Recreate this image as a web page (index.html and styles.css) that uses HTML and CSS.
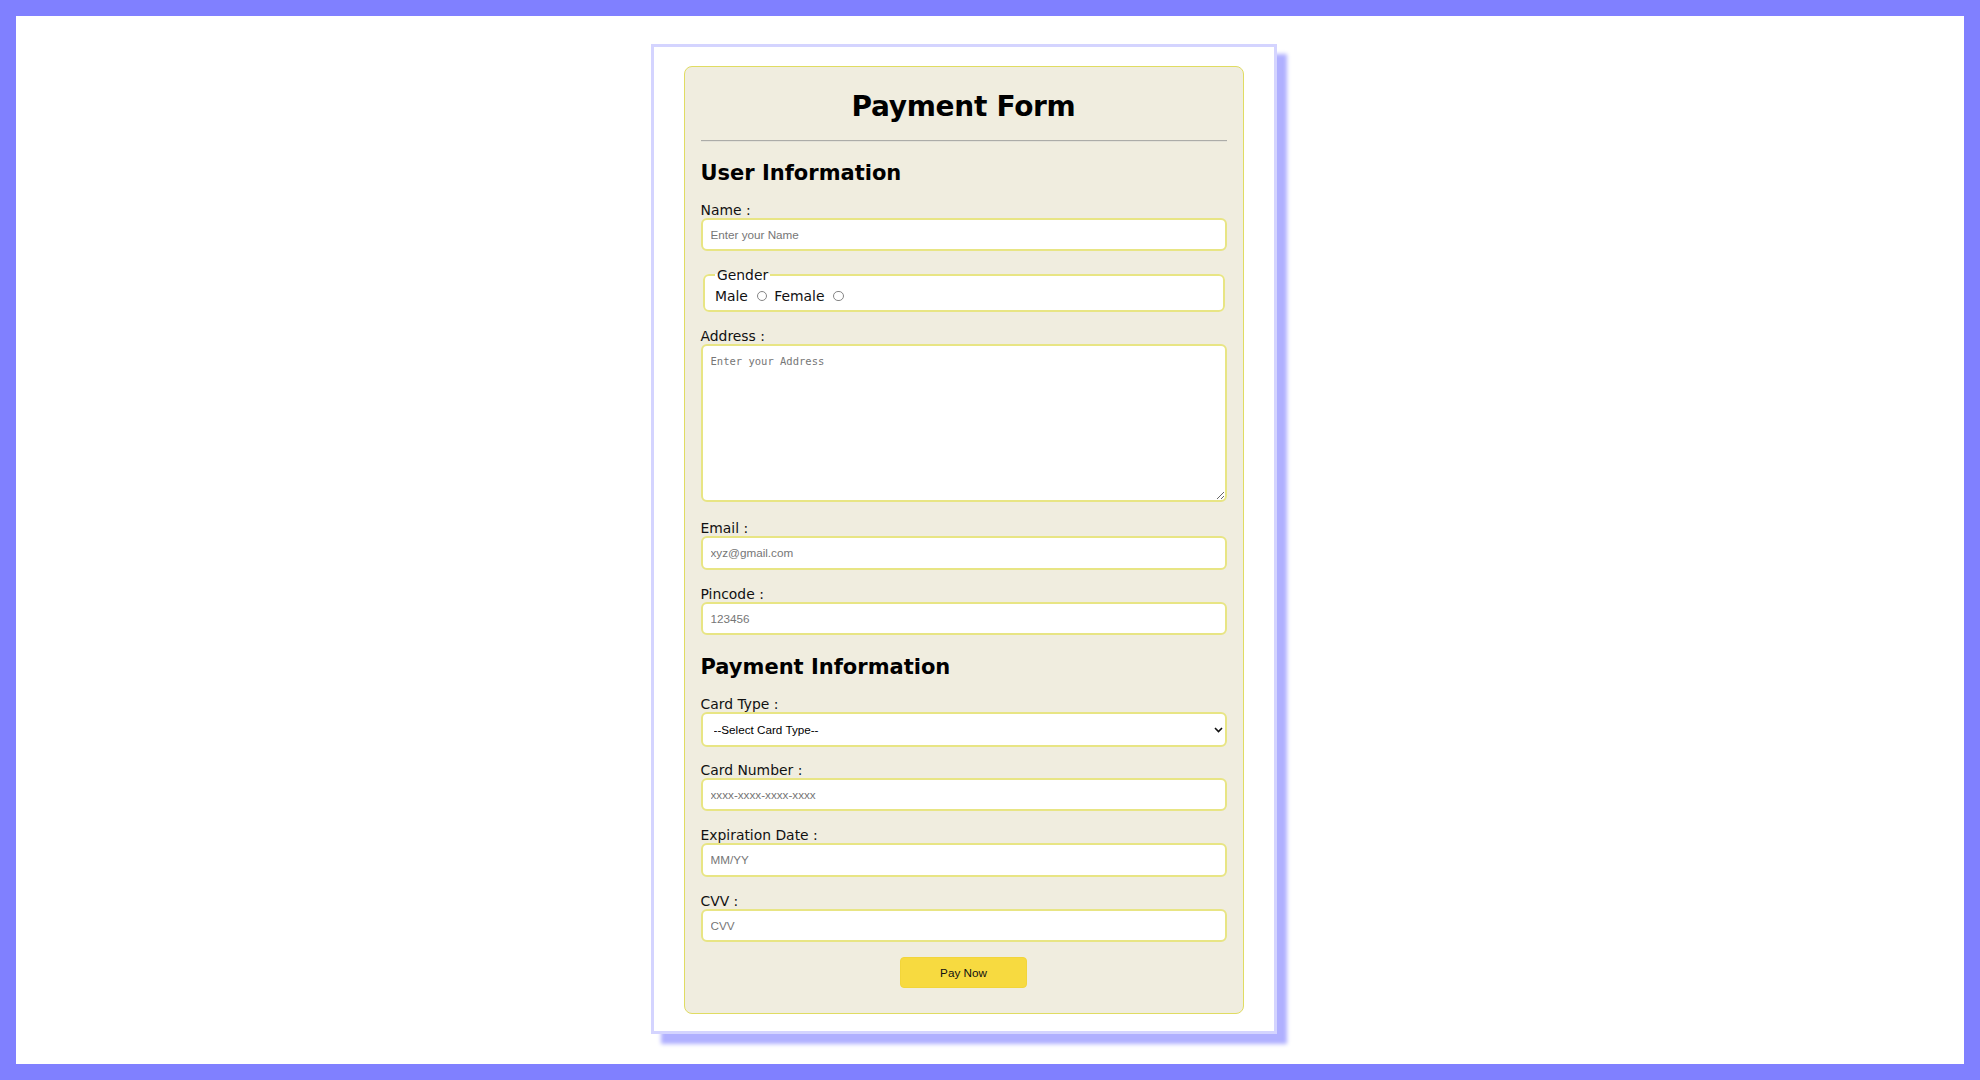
FILE: index.html
```html
<!DOCTYPE html>
<html lang="en">
<head>
<meta charset="utf-8">
<title>Payment Form</title>
<link rel="stylesheet" href="styles.css">
</head>
<body>
<div class="page">
  <div class="sheet">
    <form class="card">
      <h1 class="title">Payment Form</h1>
      <hr class="divider">
      <h2 class="section">User Information</h2>

      <label class="label" for="name">Name :</label>
      <input class="field" id="name" type="text" placeholder="Enter your Name">

      <fieldset class="gender">
        <legend class="legend">Gender</legend>
        <span>Male</span> <input class="radio" type="radio" name="gender"> <span>Female</span> <input class="radio" type="radio" name="gender">
      </fieldset>

      <label class="label" for="address">Address :</label>
      <textarea class="area" id="address" placeholder="Enter your Address"></textarea>

      <label class="label" for="email">Email :</label>
      <input class="field" id="email" type="email" placeholder="xyz@gmail.com">

      <label class="label" for="pincode">Pincode :</label>
      <input class="field" id="pincode" type="text" placeholder="123456">

      <h2 class="section section-pay">Payment Information</h2>

      <label class="label" for="cardtype">Card Type :</label>
      <div class="select-wrap">
        <select class="select" id="cardtype">
          <option>--Select Card Type--</option>
          <option>Visa</option>
          <option>MasterCard</option>
          <option>RuPay</option>
        </select>
        <svg class="chevron" width="9" height="6" viewBox="0 0 9 6" aria-hidden="true"><path d="M1 1 L4.5 4.5 L8 1" fill="none" stroke="#111" stroke-width="1.6"/></svg>
      </div>

      <label class="label" for="cardnum">Card Number :</label>
      <input class="field" id="cardnum" type="text" placeholder="xxxx-xxxx-xxxx-xxxx">

      <label class="label" for="exp">Expiration Date :</label>
      <input class="field" id="exp" type="text" placeholder="MM/YY">

      <label class="label" for="cvv">CVV :</label>
      <input class="field field-last" id="cvv" type="password" placeholder="CVV">

      <div class="actions">
        <button class="pay" type="button">Pay Now</button>
      </div>
    </form>
  </div>
</div>
</body>
</html>
```

FILE: styles.css
```css
html, body {
  margin: 0;
  padding: 0;
}

body {
  font-family: "DejaVu Sans", Verdana, sans-serif;
  color: #111;
  background: #fff;
}

.page {
  box-sizing: border-box;
  height: 100vh;
  border: 16px solid #8080ff;
  background: #fff;
  display: flex;
  align-items: flex-start;
  justify-content: center;
  padding: 27.5px 53px 0 0;
}

.sheet {
  background: #fff;
  border: 3px solid #d4d4ff;
  padding: 19px 30px 17px;
  box-shadow: 10px 10px 4px #b0b0ff;
}

.card {
  box-sizing: border-box;
  width: 560px;
  background: #f0eddf;
  border: 1px solid #e0dc62;
  border-radius: 8px;
  padding: 16px;
}

.title {
  margin: 7px 0 0;
  font-size: 28px;
  line-height: 33px;
  letter-spacing: -0.3px;
  font-weight: bold;
  text-align: center;
  color: #000;
}

.divider {
  margin: 17px 0 0;
  height: 0;
  border: 0;
  border-top: 1px solid #acaca8;
  border-bottom: 1px solid #e4e2d8;
}

.section {
  margin: 19px 0 17px;
  font-size: 21px;
  line-height: 24px;
  letter-spacing: 0;
  font-weight: bold;
  color: #000;
}

.section-pay {
  margin-top: 20px;
}

.label {
  display: block;
  font-size: 13.9px;
  line-height: 16px;
  color: #111;
}

.field {
  display: block;
  box-sizing: border-box;
  width: 100%;
  height: 33.5px;
  margin: 0 0 16px;
  padding: 0 8px;
  border: 2px solid #e8e584;
  border-radius: 6px;
  background: #fff;
  font-family: "Liberation Sans", Arial, sans-serif;
  font-size: 11.7px;
  color: #111;
  outline: none;
}

.field-last {
  margin-bottom: 14.5px;
}

.field::placeholder,
.area::placeholder {
  color: #767676;
}

.gender {
  margin: 0 2px 16px;
  padding: 5px 10.5px 6px;
  border: 2px solid #e8e584;
  border-radius: 6px;
  background: #fff;
  font-size: 13.9px;
  line-height: 16px;
  min-width: 0;
}

.legend {
  padding: 0 2px;
  font-size: 13.9px;
  line-height: 16px;
}

.radio {
  -webkit-appearance: none;
  appearance: none;
  box-sizing: border-box;
  display: inline-block;
  width: 10.5px;
  height: 10.5px;
  margin: 0 2.6px 0 4.4px;
  border: 1px solid #858585;
  border-radius: 50%;
  background: #fff;
  vertical-align: baseline;
}

.area {
  display: block;
  box-sizing: border-box;
  width: 100%;
  height: 158px;
  margin: 0 0 18px;
  padding: 9px 8px;
  border: 2px solid #e8e584;
  border-radius: 6px;
  background: #fff;
  font-family: "DejaVu Sans Mono", "Liberation Mono", monospace;
  font-size: 10.5px;
  color: #111;
  outline: none;
  resize: vertical;
}

.select-wrap {
  position: relative;
  margin: 0 0 15px;
}

.select {
  display: block;
  box-sizing: border-box;
  width: 100%;
  height: 34.5px;
  -webkit-appearance: none;
  appearance: none;
  padding: 0 20px 0 11px;
  border: 2px solid #e8e584;
  border-radius: 6px;
  background: #fff;
  font-family: "Liberation Sans", Arial, sans-serif;
  font-size: 11.7px;
  color: #000;
  outline: none;
}

.chevron {
  position: absolute;
  right: 4px;
  top: 15px;
  pointer-events: none;
}

.actions {
  display: flex;
  justify-content: center;
  margin: 0 0 9px;
}

.pay {
  box-sizing: border-box;
  width: 127.5px;
  height: 31.5px;
  border: 1px solid #f2d53a;
  border-radius: 4px;
  background: #f7da40;
  font-family: "Liberation Sans", Arial, sans-serif;
  font-size: 11.7px;
  color: #111;
  cursor: pointer;
}
```
